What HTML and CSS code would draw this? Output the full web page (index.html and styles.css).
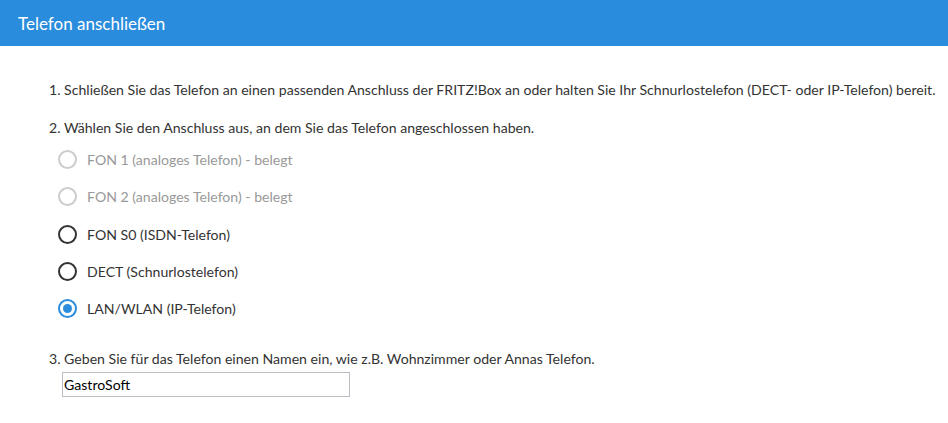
FILE: index.html
```html
<!DOCTYPE html>
<html lang="de">
  <head>
    <meta charset="UTF-8" />
    <meta name="viewport" content="width=device-width, initial-scale=1.0" />
    <title>Telefon anschließen</title>
    <link rel="stylesheet" href="styles.css">
  </head>
  <body>
    <header class="title-bar">
      <h1>Telefon anschließen</h1>
    </header>
    <main class="content">
      <p class="step">1. Schließen Sie das Telefon an einen passenden Anschluss der FRITZ!Box an oder halten Sie Ihr Schnurlostelefon (DECT- oder IP-Telefon) bereit.</p>
      <p class="step">2. Wählen Sie den Anschluss aus, an dem Sie das Telefon angeschlossen haben.</p>
      <ul class="ports">
        <li class="port disabled"><span class="radio"></span>FON 1 (analoges Telefon) - belegt</li>
        <li class="port disabled"><span class="radio"></span>FON 2 (analoges Telefon) - belegt</li>
        <li class="port"><span class="radio"></span>FON S0 (ISDN-Telefon)</li>
        <li class="port"><span class="radio"></span>DECT (Schnurlostelefon)</li>
        <li class="port checked"><span class="radio"></span>LAN/WLAN (IP-Telefon)</li>
      </ul>
      <p class="step step-name">3. Geben Sie für das Telefon einen Namen ein, wie z.B. Wohnzimmer oder Annas Telefon.</p>
      <div class="name-box">GastroSoft</div>
    </main>
  </body>
</html>
```

FILE: styles.css
```css
* {
  margin: 0;
  padding: 0;
  box-sizing: border-box;
}
body {
  width: 948px;
  height: 423px;
  background-color: #ffffff;
  color: #333333;
  font-family: Lato, sans-serif;
  font-size: 14.1px;
  overflow: hidden;
}
.title-bar {
  height: 46px;
  background-color: #2a8cdc;
  display: flex;
  align-items: center;
  padding-left: 18px;
}
.title-bar h1 {
  color: #ffffff;
  font-size: 17px;
  font-weight: normal;
}
.content {
  padding: 34px 0 0 49px;
}
.step {
  line-height: 20px;
  margin-bottom: 18px;
}
.ports {
  list-style: none;
  margin-top: -15px;
}
.port {
  display: flex;
  align-items: center;
  gap: 10px;
  height: 37.25px;
  padding-left: 9px;
}
.radio {
  width: 19px;
  height: 19px;
  border: 2px solid #333333;
  border-radius: 50%;
  position: relative;
}
.port.disabled {
  color: #999999;
}
.port.disabled .radio {
  border-color: #cccccc;
}
.port.checked .radio {
  border-color: #2a8cdc;
}
.port.checked .radio::after {
  content: "";
  position: absolute;
  left: 3px;
  top: 3px;
  width: 9px;
  height: 9px;
  border-radius: 50%;
  background-color: #2a8cdc;
}
.step-name {
  margin-top: 22px;
  margin-bottom: 3px;
}
.name-box {
  width: 288px;
  height: 25px;
  margin-left: 13px;
  border: 1px solid #b9bec4;
  color: #000000;
  line-height: 23px;
  padding-left: 1px;
}
```
